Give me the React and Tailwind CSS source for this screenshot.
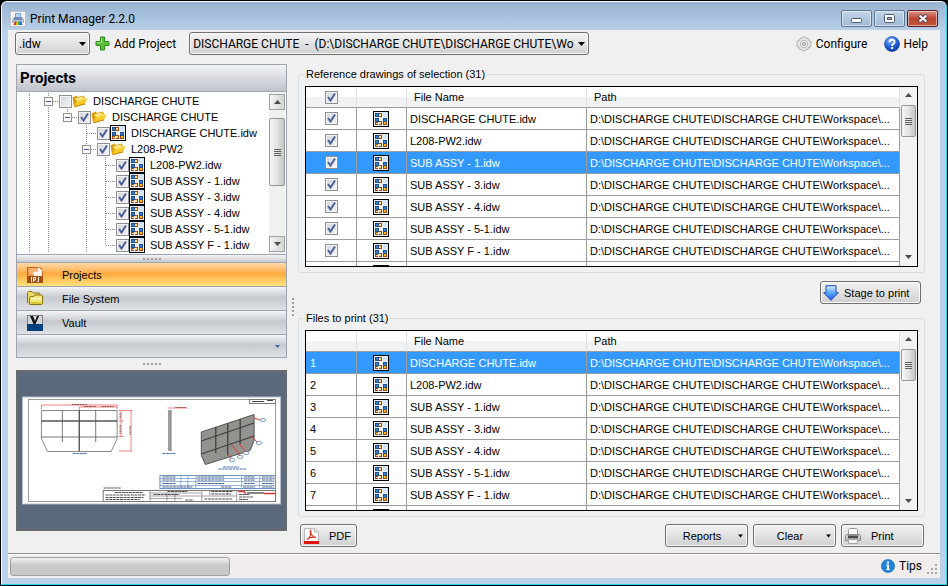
import React from 'react';

const TREE = [
  { guides: ['line', 'expand'], checked: false, type: 'folder', name: 'DISCHARGE CHUTE' },
  { guides: ['line', 'line', 'expandTop'], checked: true, type: 'folder', name: 'DISCHARGE CHUTE' },
  { guides: ['line', 'line', 'none', 'tee'], checked: true, type: 'file', name: 'DISCHARGE CHUTE.idw' },
  { guides: ['line', 'line', 'none', 'expand'], checked: true, type: 'folder', name: 'L208-PW2' },
  { guides: ['line', 'line', 'none', 'line', 'tee'], checked: true, type: 'file', name: 'L208-PW2.idw' },
  { guides: ['line', 'line', 'none', 'line', 'tee'], checked: true, type: 'file', name: 'SUB ASSY - 1.idw' },
  { guides: ['line', 'line', 'none', 'line', 'tee'], checked: true, type: 'file', name: 'SUB ASSY - 3.idw' },
  { guides: ['line', 'line', 'none', 'line', 'tee'], checked: true, type: 'file', name: 'SUB ASSY - 4.idw' },
  { guides: ['line', 'line', 'none', 'line', 'tee'], checked: true, type: 'file', name: 'SUB ASSY - 5-1.idw' },
  { guides: ['line', 'line', 'none', 'line', 'end'], checked: true, type: 'file', name: 'SUB ASSY F - 1.idw' },
];

const FILES = [
  'DISCHARGE CHUTE.idw',
  'L208-PW2.idw',
  'SUB ASSY - 1.idw',
  'SUB ASSY - 3.idw',
  'SUB ASSY - 4.idw',
  'SUB ASSY - 5-1.idw',
  'SUB ASSY F - 1.idw',
];

const PATH = 'D:\\DISCHARGE CHUTE\\DISCHARGE CHUTE\\Workspace\\...';

const BUTTON =
  'flex h-[23px] items-center rounded-[3px] border border-[#707070] bg-linear-to-b from-[#f2f2f2] via-[#e2e2e2] to-[#cfcfcf] shadow-[inset_0_0_0_1px_#fafafa]';

/* ---------- icons ---------- */

function DrawingIcon() {
  return (
    <svg className="block size-4 shrink-0" viewBox="0 0 16 16" shapeRendering="crispEdges" aria-hidden="true">
      <rect width="16" height="16" fill="#000" />
      <rect x="1" y="1" width="14" height="14" fill="#eaf3fa" />
      <rect x="10" y="1" width="5" height="5" fill="#d3e6f4" />
      <g fill="#1f4f8c">
        <rect x="2" y="2" width="4" height="4" />
        <rect x="2" y="7" width="4" height="4" />
        <rect x="10" y="7" width="4" height="4" />
      </g>
      <g fill="#3f7fc4">
        <rect x="3" y="3" width="2" height="2" />
        <rect x="3" y="8" width="2" height="2" />
        <rect x="11" y="8" width="2" height="2" />
      </g>
      <g fill="#a8430f">
        <rect x="6" y="2" width="3" height="4" />
        <rect x="2" y="11" width="3" height="3" />
        <rect x="6" y="10" width="3" height="4" />
        <rect x="10" y="11" width="4" height="3" />
      </g>
      <g fill="#ffe680">
        <rect x="6" y="3" width="2" height="2" />
        <rect x="3" y="12" width="2" height="1" />
        <rect x="6" y="11" width="2" height="2" />
      </g>
      <rect x="11" y="11" width="2" height="2" fill="#ffc400" />
    </svg>
  );
}

function FolderOpenIcon() {
  return (
    <svg className="block size-4 shrink-0" viewBox="0 0 16 16" aria-hidden="true">
      <path d="M.5 4.500 4.500 2.500 6 4l5.500-1.500L13 5 5 13.500 2 14Z" fill="#dc9c12" />
      <path d="M3 5.500 11 3.500l.5 2.500L5 8Z" fill="#ffe98a" />
      <path d="M2 14 5 7.500 15.700 5 12.800 11.200Z" fill="#f8c828" />
      <path d="M5 7.500 15.700 5 15.200 6 5 8.600Z" fill="#ffe474" />
      <path d="M2 14.300 12.800 11.500 13.200 10.500 2.600 13.200Z" fill="#b87a0a" />
    </svg>
  );
}

function AppIcon() {
  return (
    <svg className="block size-4" viewBox="0 0 16 16" aria-hidden="true">
      <rect width="16" height="16" fill="#8a93a0" />
      <rect x="0.500" y="0.500" width="15" height="15" fill="#f6f6f4" />
      <path d="M5 2h6v4H5z" fill="#7fa6d8" />
      <path d="M6 3h4v3H6z" fill="#b8d4f2" />
      <path d="M2 8l2-2h8l2 2v4H2z" fill="#b4bac2" />
      <path d="M4 6h8v3H4z" fill="#6f8db8" />
      <path d="M5 10.500h1.500V14H3.500z" fill="#e02020" />
      <path d="M6.500 10.500H8V14H6z" fill="#f0c000" />
      <path d="M8 10.500h1.500L10 14H8z" fill="#30b040" />
      <path d="M9.500 10.500H11l1.500 3.500H10z" fill="#2060e0" />
    </svg>
  );
}

function PlusIcon() {
  return (
    <svg className="block size-[15px]" viewBox="0 0 15 15" aria-hidden="true">
      <path d="M5.500 1h4v4.500H14v4H9.500V14h-4V9.500H1v-4h4.500z" fill="#5cc03c" stroke="#2f8a1e" />
      <path d="M6.500 2v4.500H2" fill="none" stroke="#a6e48c" />
    </svg>
  );
}

function GearIcon() {
  return (
    <svg className="block size-4" viewBox="0 0 16 16" aria-hidden="true">
      <path
        d="M6.500 1.200 8 .6l1.500.6.8 1.400 1.600-.4 1.300 1.100-.1 1.600 1.700.7.500 1.500-.9 1.300.5 1.600-.9 1.300-1.600.2-.4 1.600-1.400.9-1.500-.6L8 15.200l-1.500-.6-.9-1.300-1.600.3-1.200-1-.1-1.700-1.600-.6L.7 8.500l.9-1.300-.4-1.600.9-1.300 1.600-.2.600-1.600 1.400-.3z"
        fill="#e6e6e6"
        stroke="#9c9c9c"
        strokeWidth="0.800"
      />
      <circle cx="8" cy="8" r="3.600" fill="#f4f4f4" stroke="#b0b0b0" />
      <circle cx="8" cy="8" r="1.500" fill="#dcdcdc" stroke="#999" />
    </svg>
  );
}

function HelpIcon() {
  return (
    <svg className="block size-4" viewBox="0 0 16 16" aria-hidden="true">
      <defs>
        <radialGradient id="help" cx="0.400" cy="0.250" r="0.850">
          <stop offset="0" stopColor="#7fb0ff" />
          <stop offset="0.550" stopColor="#2160d8" />
          <stop offset="1" stopColor="#0a2f98" />
        </radialGradient>
      </defs>
      <circle cx="8" cy="8" r="7.500" fill="url(#help)" stroke="#0e3590" strokeWidth="0.600" />
      <path d="M5.500 6.200C5.500 3 10.600 3 10.600 6c0 1.800-2.500 1.900-2.500 3.900" fill="none" stroke="#fff" strokeWidth="1.900" />
      <rect x="7.100" y="11" width="2" height="2" fill="#fff" />
    </svg>
  );
}

function InfoIcon() {
  return (
    <svg className="block size-[14px]" viewBox="0 0 14 14" aria-hidden="true">
      <circle cx="7" cy="7" r="6.600" fill="#1f86d8" stroke="#1668b4" strokeWidth="0.600" />
      <rect x="6" y="2.500" width="2" height="2" fill="#fff" />
      <path d="M5 5.500h3V10h1v1H5v-1h1V6.500H5z" fill="#fff" />
    </svg>
  );
}

function IpjIcon() {
  return (
    <svg className="block size-4" viewBox="0 0 16 16" aria-hidden="true">
      <path d="M0 0h13l3 3v13H0z" fill="#c8641a" />
      <path d="M1 1h10v8H1z" fill="#e8944a" />
      <path d="M2 1h9v3h3v5L2 7z" fill="#f4b070" />
      <path d="M11 0v4h5z" fill="#fff" />
      <path d="M6 5 15 4v5H7z" fill="#fff6ea" />
      <rect y="9" width="16" height="7" fill="#a84c0c" />
      <path d="M4.500 10v5M6.500 15v-4.500h2V13h-2M11.500 10v4.500H10" fill="none" stroke="#fff" />
    </svg>
  );
}

function FileSystemIcon() {
  return (
    <svg className="block size-4" viewBox="0 0 16 16" aria-hidden="true">
      <path d="M.5 12V1.500L1.500.5H5l1.500 1.500H12l1 1V5" fill="#eadb6a" stroke="#8a7610" />
      <path d="M2.500 13.500v-7l1-1h3l1-1.500h7l1 1v8l-1 .5h-11z" fill="#f2e678" stroke="#8a7610" />
      <path d="M4 7h10.500v1H4z" fill="#fffbd0" />
      <path d="M3.500 11h11v2h-11z" fill="#dcc83c" />
    </svg>
  );
}

function VaultIcon() {
  return (
    <svg className="block size-4" viewBox="0 0 16 16" aria-hidden="true">
      <rect width="16" height="16" fill="#7c8288" />
      <rect x="1" y="1" width="14" height="8" fill="#d2d5d8" />
      <rect y="9" width="16" height="7" fill="#00407e" />
      <path d="M3 1h3l2 5 2-5h2L8.500 9h-2z" fill="#111" />
    </svg>
  );
}

function DownArrowIcon() {
  return (
    <svg className="block size-4" viewBox="0 0 16 16" aria-hidden="true">
      <defs>
        <linearGradient id="stage" x1="0" y1="0" x2="0" y2="1">
          <stop offset="0" stopColor="#d6ecff" />
          <stop offset="0.500" stopColor="#58a4f8" />
          <stop offset="1" stopColor="#1c5ce8" />
        </linearGradient>
      </defs>
      <path d="M3 .7h10v7h2.400L8 15.300.6 7.700H3z" fill="url(#stage)" stroke="#1c48b8" />
    </svg>
  );
}

function PdfIcon() {
  return (
    <svg className="block h-4 w-[15px]" viewBox="0 0 15 16" aria-hidden="true">
      <path d="M.5.5h10L14.500 4v11.500H.5z" fill="#fbfbfb" stroke="#b8b8b8" />
      <path d="M10.500.5V4h4" fill="#e4e4e4" stroke="#b8b8b8" />
      <path d="M3 11.500C6 10 8 5 6.500 2.500 5.500 5 8 9 12 9.500 8 8.500 5 9.500 3 11.500Z" fill="none" stroke="#e02a1c" strokeWidth="1.200" />
      <rect x="0" y="13" width="15" height="3" fill="#e0140c" />
    </svg>
  );
}

function PrinterIcon() {
  return (
    <svg className="block size-4" viewBox="0 0 16 16" aria-hidden="true">
      <path d="M3.500 7V1.500L4.500.5h7l1 1V7" fill="#fbfbfb" stroke="#9a9a9a" />
      <path d="M1.500 6.500h13l1 1.500v4.500H.5V8z" fill="#d0d0d0" stroke="#8c8c8c" />
      <rect x="3" y="7.500" width="10" height="3" fill="#4c4c4c" />
      <rect x="1" y="10.500" width="14" height="1" fill="#b0b0b0" />
      <path d="M3.500 11.500h9v4h-9z" fill="#f4f4f4" stroke="#a4a4a4" />
    </svg>
  );
}

function Caret({ className }) {
  return (
    <svg className={className} width="7" height="4" viewBox="0 0 7 4" aria-hidden="true">
      <path d="M0 0h7L3.500 4z" fill="currentColor" />
    </svg>
  );
}

/* ---------- small controls ---------- */

function Tick({ checked = true, label }) {
  return (
    <label className="relative block size-[13px] shrink-0">
      <input
        type="checkbox"
        defaultChecked={checked}
        aria-label={label}
        className="peer block size-[13px] appearance-none border border-[#8e8f8f] bg-linear-to-br from-[#cfd4da] to-[#f6f6f6] shadow-[inset_0_0_0_1px_#f4f4f4]"
      />
      <svg
        className="pointer-events-none absolute inset-0 hidden size-[13px] peer-checked:block"
        viewBox="0 0 13 13"
        aria-hidden="true"
      >
        <path d="M3 6 5.500 9.500 10 2.500" fill="none" stroke="#4a5f97" strokeWidth="2" />
      </svg>
    </label>
  );
}

function Combo({ label, options, className }) {
  return (
    <div className={`relative h-[23px] ${className}`}>
      <select
        aria-label={label}
        className="block h-full w-full appearance-none overflow-hidden rounded-[3px] border border-[#707070] bg-linear-to-b from-[#f2f2f2] via-[#e4e4e4] to-[#cfcfcf] pr-3 pl-[3px] whitespace-pre shadow-[inset_0_0_0_1px_#fafafa]"
      >
        {options.map((option) => (
          <option key={option}>{option}</option>
        ))}
      </select>
      <Caret className="pointer-events-none absolute top-[10px] right-1" />
    </div>
  );
}

function Arrow({ up = false, boxed = false }) {
  return (
    <button
      type="button"
      aria-label={up ? 'Scroll up' : 'Scroll down'}
      className={`flex h-4 w-full shrink-0 items-center justify-center ${
        boxed ? 'border border-[#a0a0a0] bg-linear-to-r from-[#f4f4f4] to-[#d4d4d4]' : ''
      }`}
    >
      <svg width="7" height="4" viewBox="0 0 7 4" aria-hidden="true">
        <path d={up ? 'M0 4h7L3.500 0z' : 'M0 0h7L3.500 4z'} fill="#4c4c4c" />
      </svg>
    </button>
  );
}

function Thumb({ className }) {
  return (
    <div
      className={`flex w-full shrink-0 flex-col items-center justify-center gap-px rounded-[2px] border border-[#979797] bg-linear-to-r from-[#f6f6f6] via-[#e4e4e4] to-[#c4c4c4] ${className}`}
    >
      {[0, 1, 2, 3].map((i) => (
        <span key={i} className="h-px w-[7px] bg-[#606060]" />
      ))}
    </div>
  );
}

function Dots({ vertical = false }) {
  return (
    <div className={`flex gap-[2px] ${vertical ? 'flex-col' : ''}`}>
      {[0, 1, 2, 3, 4].map((i) => (
        <span key={i} className="size-[2px] bg-[#a0a0a0]" />
      ))}
    </div>
  );
}

/* ---------- title bar and tool bar ---------- */

function TitleBar() {
  const control =
    'flex h-[17px] w-[31px] items-center justify-center rounded-[2px] border shadow-[inset_0_0_0_1px_rgba(255,255,255,0.5)]';
  return (
    <header className="flex h-7 shrink-0 items-center bg-linear-to-b from-[#98b3d2] to-[#b7cfe8] pt-[5px] pr-2 pl-2">
      <div className="flex flex-1 items-center gap-1">
        <AppIcon />
        <h1>Print Manager 2.2.0</h1>
      </div>
      <div className="flex gap-[2px]">
        <button type="button" aria-label="Minimize" className={`${control} border-[#5f7690] bg-linear-to-b from-[#c3d4e8] to-[#9fb9d6]`}>
          <svg className="mt-1" width="11" height="5" viewBox="0 0 11 5" aria-hidden="true">
            <rect x="0.500" y="0.500" width="10" height="4" rx="1" fill="#fff" stroke="#505866" />
          </svg>
        </button>
        <button type="button" aria-label="Maximize" className={`${control} border-[#5f7690] bg-linear-to-b from-[#c3d4e8] to-[#9fb9d6]`}>
          <svg width="11" height="9" viewBox="0 0 11 9" aria-hidden="true">
            <rect x="0.500" y="0.500" width="10" height="8" rx="1" fill="#fff" stroke="#505866" />
            <rect x="3.500" y="3.500" width="4" height="2" fill="#9fb9d6" stroke="#505866" />
          </svg>
        </button>
        <button type="button" aria-label="Close" className={`${control} border-[#5c1a1a] bg-linear-to-b from-[#dc9488] via-[#bc4430] to-[#c0563c]`}>
          <svg width="12" height="9" viewBox="0 0 12 9" aria-hidden="true">
            <path d="M2 1l8 7M10 1 2 8" stroke="#5a4650" strokeWidth="4" />
            <path d="M2.500 1.500l7 6M9.500 1.500l-7 6" stroke="#fff" strokeWidth="2" />
          </svg>
        </button>
      </div>
    </header>
  );
}

function ToolBar() {
  return (
    <div className="flex h-[30px] shrink-0 items-center pr-3 pb-[3px] pl-[7px]">
      <Combo label="File type" options={['.idw']} className="w-[75px]" />
      <button type="button" className="ml-[5px] flex items-center gap-1">
        <PlusIcon />
        Add Project
      </button>
      <Combo
        label="Project"
        options={['DISCHARGE CHUTE \u00a0- \u00a0(D:\\DISCHARGE CHUTE\\DISCHARGE CHUTE\\Wo']}
        className="ml-[13px] w-[400px]"
      />
      <button type="button" className="ml-auto flex items-center gap-1">
        <GearIcon />
        Configure
      </button>
      <button type="button" className="ml-[17px] flex items-center gap-[3px]">
        <HelpIcon />
        Help
      </button>
    </div>
  );
}

/* ---------- left side ---------- */

function Guide({ kind, last }) {
  const hasUp = kind !== 'none';
  const dash = { stroke: '#8a8a8a', strokeDasharray: '1 1' };
  return (
    <svg
      className={`block h-4 shrink-0 ${last ? 'w-5' : 'w-[19px]'}`}
      viewBox={last ? '0 0 20 16' : '0 0 19 16'}
      shapeRendering="crispEdges"
      aria-hidden="true"
    >
      {hasUp && <path d="M9.500 0v8" {...dash} />}
      {(kind === 'line' || kind === 'tee' || kind === 'expand') && <path d="M9.500 8v8" {...dash} />}
      {last && <path d="M10 8.500h10" {...dash} />}
      {kind.startsWith('expand') && (
        <>
          <rect x="5.500" y="4.500" width="8" height="8" fill="#fafafa" stroke="#919191" />
          <path d="M7 8.500h5" stroke="#3c56a8" />
        </>
      )}
    </svg>
  );
}

function ProjectTree() {
  return (
    <div className="flex min-h-0 flex-1 bg-white">
      <ul className="min-w-0 flex-1 overflow-hidden pt-px pl-[3px]">
        {TREE.map((node, i) => (
          <li key={i} className="flex h-4 items-center">
            {node.guides.map((kind, g) => (
              <Guide key={g} kind={kind} last={g === node.guides.length - 1} />
            ))}
            <Tick checked={node.checked} label={`Select ${node.name}`} />
            {node.type === 'folder' ? <FolderOpenIcon /> : <DrawingIcon />}
            <span className="ml-[5px] whitespace-nowrap">{node.name}</span>
          </li>
        ))}
      </ul>
      <div className="mr-px flex w-4 shrink-0 flex-col bg-[#f0f0f0] py-[2px]">
        <Arrow up boxed />
        <Thumb className="mt-2 h-[68px]" />
        <div className="flex-1" />
        <Arrow boxed />
      </div>
    </div>
  );
}

function NavItem({ icon, label, active }) {
  return (
    <button
      type="button"
      className={`flex h-6 shrink-0 items-center gap-[19px] border-t border-[#9ea5b1] pl-[10px] text-left ${
        active
          ? 'bg-linear-to-b from-[#ffd9a8] from-0% via-[#ffab3f] via-45% to-[#fee17a]'
          : 'bg-linear-to-b from-[#f4f5f7] from-0% via-[#c6cacf] via-45% to-[#dfe2e7]'
      }`}
    >
      {icon}
      {label}
    </button>
  );
}

function Sidebar() {
  return (
    <aside className="flex w-[271px] shrink-0 flex-col pt-1 text-[11px]">
      <section className="flex min-h-0 flex-1 flex-col border border-[#9ea5b1]">
        <h2 className="flex h-[27px] shrink-0 items-center border-b border-[#9ea5b1] bg-linear-to-b from-[#f4f4f6] to-[#bfc3cb] pl-[3px] font-[Roboto,sans-serif] text-[15px] font-bold">
          Projects
        </h2>
        <ProjectTree />
        <div className="flex h-2 shrink-0 items-center justify-center border-t border-[#9ea5b1] bg-linear-to-b from-[#f4f5f7] to-[#c6cacf]">
          <Dots />
        </div>
        <nav className="flex flex-col">
          <NavItem icon={<IpjIcon />} label="Projects" active />
          <NavItem icon={<FileSystemIcon />} label="File System" />
          <NavItem icon={<VaultIcon />} label="Vault" />
          <button
            type="button"
            aria-label="More views"
            className="flex h-[23px] items-center justify-end border-t border-[#9ea5b1] bg-linear-to-b from-[#f4f5f7] from-0% via-[#c6cacf] via-45% to-[#dfe2e7] pr-[6px] text-[#2f62b8]"
          >
            <svg width="5" height="3" viewBox="0 0 5 3" aria-hidden="true">
              <path d="M0 0h5L2.500 3z" fill="currentColor" />
            </svg>
          </button>
        </nav>
      </section>
      <div className="flex h-3 shrink-0 items-center justify-center">
        <Dots />
      </div>
      <Preview />
      <div className="h-[22px] shrink-0" />
    </aside>
  );
}

function Preview() {
  const bubbles = [
    [248, 50],
    [244, 73],
    [231, 83],
    [225, 87],
    [217, 90],
  ];
  return (
    <div className="h-[161px] shrink-0 border-2 border-[#6a6a6a] bg-[#5a697c]">
      <svg className="block h-full w-full" viewBox="0 0 268 157" preserveAspectRatio="none" role="img" aria-label="Drawing preview">
        <rect x="4.500" y="25" width="259" height="107" fill="#fff" stroke="#b8bcd0" />
        <rect x="10.500" y="27.500" width="248" height="102" fill="none" stroke="#999" />
        <rect x="232.500" y="27.500" width="26" height="4" fill="#fff" stroke="#777" />
        <path d="M235 29.500h12M250 28.500h6" stroke="#444" />
        <g stroke="#555" fill="none">
          <path d="M23.500 38.500h76v28l-6 13h-64l-6-13z" strokeWidth="0.700" />
          <path d="M23.500 49h76M61.500 38v41" strokeWidth="1.400" />
          <path d="M23.500 65h76M44.500 38v32M78 38v32" strokeWidth="0.800" />
          <path d="M151.500 38v41M153.500 38v41" />
          <path d="M152.500 38v41" stroke="#888" />
        </g>
        <g stroke="#f46060" fill="none" strokeWidth="0.800">
          <path d="M23.500 37v-4h76v4M61.500 38v-3h38M103.500 38.500v26M113.500 38.500v40.500M101 38.500h14M101 49h5M101 64.500h5M101 79h14M150 36h20" />
        </g>
        <path d="M54 32.500h15M66 34.500h12M84 34.500h12M158 35.500h11M102.500 41v6M102.500 53v9M112.500 54v9" stroke="#8a5050" strokeDasharray="2 0.600" />
        <path d="M55 81.500h14M145 81.500h13M206 95h16M201 97h28" stroke="#4a72a4" strokeWidth="1.200" strokeDasharray="3 0.600" />
        <path d="M184 60 237 42.500v26l-4 10-45 14-4-9z" fill="#92928f" stroke="#555" />
        <path d="M184 69 237 51M184 82 237 64M198.500 55v26M210.500 51v32M223 47v25" stroke="#404040" strokeWidth="1.300" fill="none" />
        <path d="M237 46 243 48M235 65 242 72M222 72 230 81M214 72 224 85M211 83 215 88" stroke="#f03030" />
        {bubbles.map(([x, y]) => (
          <ellipse key={x} cx={x - 2} cy={y - 2} rx="3" ry="1.500" fill="#fff" stroke="#4a72a4" strokeWidth="0.700" />
        ))}
        <rect x="142.500" y="103.500" width="116" height="13" fill="#fff" stroke="#6a94c8" />
        <path d="M142 106.500h116M142 109.500h116M142 113.500h116M163.500 103v13M170.500 103v13M178.500 103v13M224.500 103v13M242.500 103v13" stroke="#6a94c8" strokeWidth="0.700" />
        <path d="M145 105h13M180 105h27M227 105h11M245 105h12M145 108h13M180 108h27M227 108h11M245 108h12M145 111.500h13M180 111.500h27M227 111.500h11M245 111.500h12M145 115h30M204 115h10M226 115h12M245 115h12" stroke="#46607e" strokeWidth="1.200" strokeDasharray="3 0.500" />
        <rect x="85.500" y="118.500" width="173" height="11" fill="#fff" stroke="#777" />
        <path d="M132.500 118v11M184.500 118v11M219.500 118v11M149.500 121v8M157.500 121v8M132 124h52M132 121h52M132 126.500h33M184 124h35M192.500 118v5M210.500 118v5" stroke="#777" strokeWidth="0.700" />
        <path d="M86 116h17M97 120.500h28M88 123h40M88 125.500h38M88 127.500h34M150 119.500h20M136 122.500h26M168 128h8M194 119.500h22M194 122h20M187 127h28M222 122.500h10M222 125h14M222 127.500h9" stroke="#505050" strokeWidth="1.200" strokeDasharray="3 0.600" />
        <path d="M221 119.500h6l2 3M247 121.500h11" stroke="#e03030" strokeWidth="1.300" fill="none" />
        <path d="M230 121h17" stroke="#444" strokeWidth="1.300" />
      </svg>
    </div>
  );
}

/* ---------- right side ---------- */

function FileGrid({ mode, selected }) {
  const staged = mode === 'staged';
  const headCell = 'border-r border-b border-[#e0e2e5] border-b-[#9c9c9c] text-left font-normal';
  const cell = 'border-r border-b border-[#9c9c9c]';
  return (
    <div className="flex min-h-0 min-w-0 flex-1 overflow-hidden border border-black bg-white">
      <div className="min-h-0 min-w-0 flex-1 overflow-hidden">
        <table className="w-full table-fixed border-separate border-spacing-0">
          <colgroup>
            <col className="w-[51px]" />
            <col className="w-[50px]" />
            <col className="w-[180px]" />
            <col />
          </colgroup>
          <thead>
            <tr className="h-[21px] bg-linear-to-b from-white from-45% to-[#f1f2f4] to-50%">
              <th className={headCell} scope="col">
                {!staged && (
                  <div className="flex justify-center">
                    <Tick label="Select all files" />
                  </div>
                )}
              </th>
              <th className={headCell} scope="col" />
              <th className={`${headCell} pl-[7px]`} scope="col">
                File Name
              </th>
              <th className={`${headCell} pl-[7px]`} scope="col">
                Path
              </th>
            </tr>
          </thead>
          <tbody>
            {FILES.map((name, i) => (
              <tr key={name} className={`h-[22px] ${i === selected ? 'bg-[#3399ff] text-white' : ''}`}>
                <td className={cell}>
                  {staged ? (
                    <span className="pl-1">{i + 1}</span>
                  ) : (
                    <div className="flex justify-center">
                      <Tick label={`Select ${name}`} />
                    </div>
                  )}
                </td>
                <td className={cell}>
                  <div className="flex justify-center pr-px">
                    <DrawingIcon />
                  </div>
                </td>
                <td className={`${cell} truncate pl-[3px]`}>{name}</td>
                <td className={`${cell} overflow-hidden pl-[3px] whitespace-nowrap`}>{PATH}</td>
              </tr>
            ))}
            <tr className="h-[22px]">
              <td className={cell}>
                {!staged && (
                  <div className="flex justify-center">
                    <Tick label="Select next file" />
                  </div>
                )}
              </td>
              <td className={cell}>
                <div className="flex justify-center pr-px">
                  <DrawingIcon />
                </div>
              </td>
              <td className={cell} />
              <td className={cell} />
            </tr>
          </tbody>
        </table>
      </div>
      <div className="flex w-[17px] shrink-0 flex-col bg-[#f2f2f2] px-px pb-px">
        <Arrow up />
        <Thumb className="mt-[2px] h-8" />
        <div className="flex-1" />
        <Arrow />
      </div>
    </div>
  );
}

function Group({ title, children }) {
  return (
    <fieldset className="flex min-h-0 min-w-0 flex-1 rounded-[3px] border border-[#d5dfe5] px-[6px] pt-1 pb-[5px]">
      <legend className="px-px leading-4">{title}</legend>
      {children}
    </fieldset>
  );
}

function Workspace() {
  return (
    <main className="flex min-w-0 flex-1 flex-col pt-[6px] pr-[15px] pb-[6px] text-[11px]">
      <Group title="Reference drawings of selection (31)">
        <FileGrid mode="reference" selected={2} />
      </Group>
      <div className="flex shrink-0 justify-end pt-2 pr-1 pb-[6px]">
        <button type="button" className={`${BUTTON} w-[101px] gap-[5px] pl-[2px]`}>
          <DownArrowIcon />
          Stage to print
        </button>
      </div>
      <Group title="Files to print (31)">
        <FileGrid mode="staged" selected={0} />
      </Group>
      <div className="flex shrink-0 gap-[5px] pt-[7px] pr-px pl-[2px]">
        <button type="button" className={`${BUTTON} mr-auto w-[57px] gap-[10px] pl-[3px]`}>
          <PdfIcon />
          PDF
        </button>
        <button type="button" className={`${BUTTON} w-[83px] pr-1`}>
          <span className="flex-1">Reports</span>
          <Caret className="w-[5px]" />
        </button>
        <button type="button" className={`${BUTTON} w-[83px] pr-1`}>
          <span className="flex-1">Clear</span>
          <Caret className="w-[5px]" />
        </button>
        <button type="button" className={`${BUTTON} w-[83px] gap-[10px] pl-[3px]`}>
          <PrinterIcon />
          Print
        </button>
      </div>
    </main>
  );
}

function StatusBar() {
  return (
    <footer className="flex h-[25px] shrink-0 items-center border-t border-[#8e8e8e] bg-[#f0edec] pl-[2px] shadow-[inset_0_1px_0_#fff]">
      <div
        role="progressbar"
        aria-label="Progress"
        aria-valuenow={0}
        className="h-[19px] w-[220px] rounded-[3px] border border-[#a0a0a0] bg-linear-to-b from-[#f0f0f0] from-0% via-[#c8c8c8] via-45% to-[#cacaca]"
      />
      <button type="button" className="ml-auto flex items-center gap-1">
        <InfoIcon />
        Tips
      </button>
      <svg className="mt-[6px] mr-[2px] ml-[5px]" width="11" height="11" viewBox="0 0 11 11" aria-hidden="true">
        <path d="M8 0h2v2H8zM4 4h2v2H4zM8 4h2v2H8zM0 8h2v2H0zM4 8h2v2H4zM8 8h2v2H8z" fill="#a8a8a8" />
      </svg>
    </footer>
  );
}

export default function App() {
  return (
    <div className="flex h-screen min-h-[480px] flex-col bg-black p-px font-[Roboto,sans-serif] text-[12px] leading-[14px] text-black">
      <div className="flex min-h-0 flex-1 flex-col overflow-hidden rounded-t-[6px] border-t border-r border-b border-l border-t-white border-r-[#3cd6f4] border-b-[#1fd0f0] border-l-white bg-[#b9d1ea]">
        <TitleBar />
        <div className="mx-[6px] mb-[6px] flex min-h-0 flex-1 flex-col bg-[#f0f0f0]">
          <ToolBar />
          <div className="flex min-h-0 flex-1 pl-2 font-['Liberation_Sans',Arial,sans-serif]">
            <Sidebar />
            <div className="flex w-[11px] shrink-0 items-center justify-center">
              <Dots vertical />
            </div>
            <Workspace />
          </div>
          <StatusBar />
        </div>
      </div>
    </div>
  );
}
